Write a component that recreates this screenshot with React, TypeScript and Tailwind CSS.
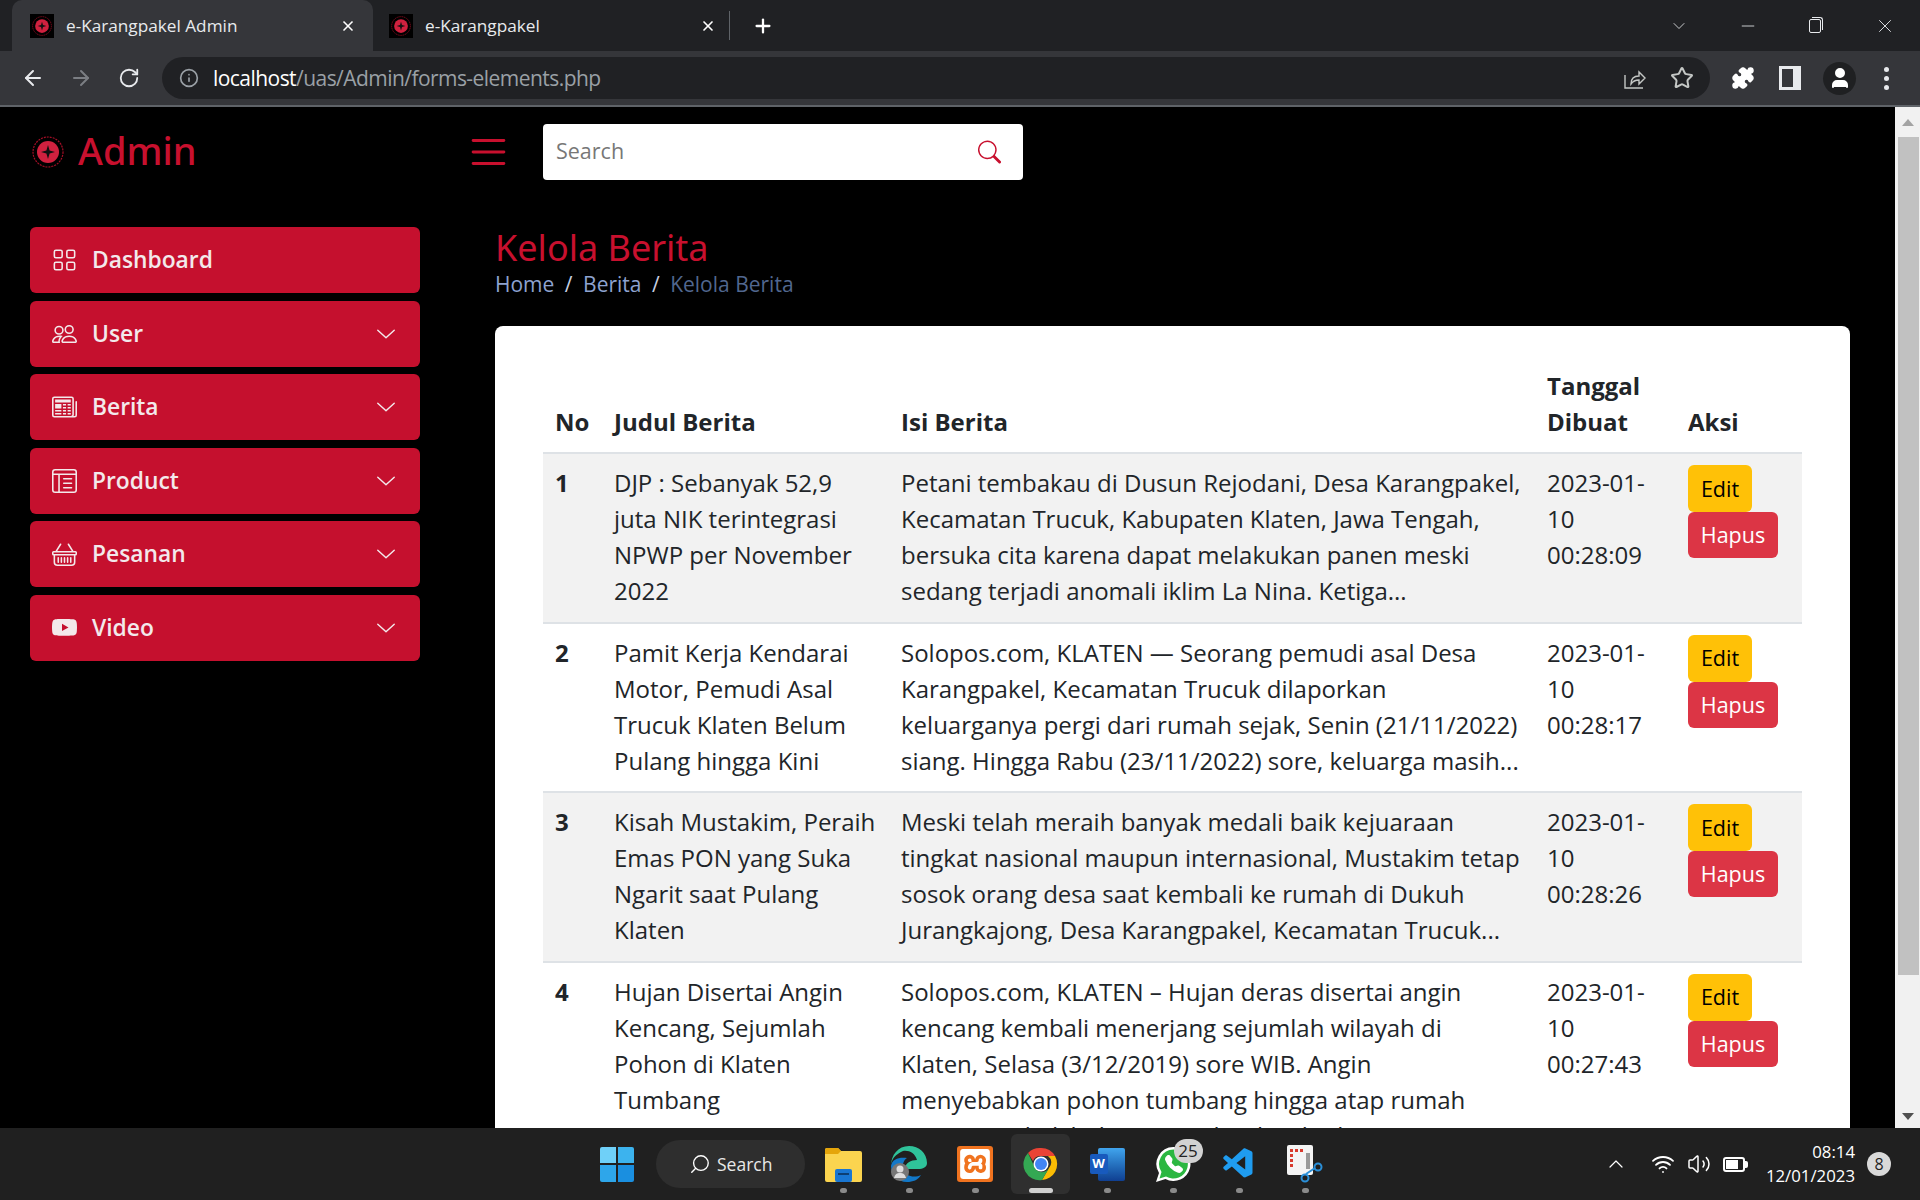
import { ReactNode } from "react";
import {
	BsBasket,
	BsChevronDown,
	BsGrid,
	BsLayoutTextWindowReverse,
	BsList,
	BsNewspaper,
	BsPeople,
	BsSearch,
	BsYoutube,
	BsTelephoneFill,
} from "react-icons/bs";
import { SiXampp } from "react-icons/si";
import { VscVscode } from "react-icons/vsc";
import {
	ArrowLeft,
	ArrowRight,
	RotateCw,
	Info,
	Star,
	Puzzle,
	User,
	X,
	Plus,
	ChevronDown,
	ChevronUp,
	Minus,
	Wifi,
	Volume2,
	Search,
} from "lucide-react";

type NewsRow = {
	no: number;
	title: string[];
	body: string[];
	time: string;
};

const rows: NewsRow[] = [
	{
		no: 1,
		title: ["DJP : Sebanyak 52,9", "juta NIK terintegrasi", "NPWP per November", "2022"],
		body: [
			"Petani tembakau di Dusun Rejodani, Desa Karangpakel,",
			"Kecamatan Trucuk, Kabupaten Klaten, Jawa Tengah,",
			"bersuka cita karena dapat melakukan panen meski",
			"sedang terjadi anomali iklim La Nina. Ketiga...",
		],
		time: "00:28:09",
	},
	{
		no: 2,
		title: ["Pamit Kerja Kendarai", "Motor, Pemudi Asal", "Trucuk Klaten Belum", "Pulang hingga Kini"],
		body: [
			"Solopos.com, KLATEN — Seorang pemudi asal Desa",
			"Karangpakel, Kecamatan Trucuk dilaporkan",
			"keluarganya pergi dari rumah sejak, Senin (21/11/2022)",
			"siang. Hingga Rabu (23/11/2022) sore, keluarga masih...",
		],
		time: "00:28:17",
	},
	{
		no: 3,
		title: ["Kisah Mustakim, Peraih", "Emas PON yang Suka", "Ngarit saat Pulang", "Klaten"],
		body: [
			"Meski telah meraih banyak medali baik kejuaraan",
			"tingkat nasional maupun internasional, Mustakim tetap",
			"sosok orang desa saat kembali ke rumah di Dukuh",
			"Jurangkajong, Desa Karangpakel, Kecamatan Trucuk...",
		],
		time: "00:28:26",
	},
	{
		no: 4,
		title: ["Hujan Disertai Angin", "Kencang, Sejumlah", "Pohon di Klaten", "Tumbang"],
		body: [
			"Solopos.com, KLATEN – Hujan deras disertai angin",
			"kencang kembali menerjang sejumlah wilayah di",
			"Klaten, Selasa (3/12/2019) sore WIB. Angin",
			"menyebabkan pohon tumbang hingga atap rumah",
			"warga rusak di beberapa titik wilayah Klaten...",
		],
		time: "00:27:43",
	},
];

const menu = [
	{ label: "Dashboard", icon: BsGrid, chevron: false },
	{ label: "User", icon: BsPeople, chevron: true },
	{ label: "Berita", icon: BsNewspaper, chevron: true },
	{ label: "Product", icon: BsLayoutTextWindowReverse, chevron: true },
	{ label: "Pesanan", icon: BsBasket, chevron: true },
	{ label: "Video", icon: BsYoutube, chevron: true },
];

function Favicon() {
	return (
		<div className="flex h-6 w-6 shrink-0 items-center justify-center bg-black">
			<LogoMark size={20} />
		</div>
	);
}

function LogoMark({ size }: { size: number }) {
	return (
		<svg width={size} height={size} viewBox="0 0 32 32">
			<circle cx="16" cy="16" r="15" fill="none" stroke="#a50e26" strokeWidth="1.2" strokeDasharray="2 1" />
			<circle cx="16" cy="16" r="11" fill="#d0213f" />
			<path d="M16 9 L17.6 14.4 L23 16 L17.6 17.6 L16 23 L14.4 17.6 L9 16 L14.4 14.4 Z" fill="#111" />
		</svg>
	);
}

function Tab({ title, active }: { title: string; active?: boolean }) {
	return (
		<div
			className={`flex h-[51px] items-center rounded-t-[10px] pl-[18px] pr-[17px] ${active ? "w-[361px] bg-[#35363a]" : "-ml-[2px] w-[362px]"}`}
		>
			<Favicon />
			<span className="ml-3 flex-1 text-[17.2px] text-[#e8eaed]">{title}</span>
			<X className="h-4 w-4 text-white" strokeWidth={2.5} />
		</div>
	);
}

function BrowserChrome() {
	return (
		<div className="shrink-0">
			<div className="flex h-[51px] items-center bg-[#202124] pl-3">
				<Tab title="e-Karangpakel Admin" active />
				<Tab title="e-Karangpakel" />
				<div className="-ml-[4px] h-[29px] w-px bg-[#5f6368]" />
				<Plus className="ml-[22px] h-[22px] w-[22px] text-white" strokeWidth={2.5} />
				<div className="ml-auto flex items-center text-[#e8eaed]">
					<ChevronDown className="h-[20px] w-[20px]" strokeWidth={1} />
					<Minus className="ml-[49px] h-[20px] w-[20px]" strokeWidth={1} />
					<div className="relative ml-[51px] h-[14px] w-[12px] rounded-[2px] border border-[#e8eaed] after:absolute after:-right-[3px] after:-top-[3px] after:h-[13px] after:w-[11px] after:rounded-tr-[3px] after:border-r after:border-t after:border-[#e8eaed]" />
					<X className="ml-[53px] mr-[24px] h-[22px] w-[22px]" strokeWidth={1} />
				</div>
			</div>
			<div className="flex h-[54px] items-center bg-[#35363a] pl-[21px] text-[#e8eaed]">
				<ArrowLeft className="h-6 w-6" strokeWidth={2} />
				<ArrowRight className="ml-6 h-6 w-6 text-[#7b7e83]" strokeWidth={2} />
				<RotateCw className="ml-[25px] h-[22px] w-[22px]" strokeWidth={2} />
				<div className="ml-[22px] flex h-[42px] w-[1548px] items-center rounded-full bg-[#202124] pl-[17px] pr-[16px]">
					<Info className="h-5 w-5 text-[#9aa0a6]" strokeWidth={2} />
					<span className="ml-[14px] mt-[1px] text-[21px] tracking-[-0.55px] text-white">
						localhost<span className="text-[#9aa0a6]">/uas/Admin/forms-elements.php</span>
					</span>
					<svg className="ml-auto h-6 w-6 text-[#c4c7c5]" viewBox="0 0 24 24" fill="none" stroke="currentColor" strokeWidth="1.4">
						<path d="M3 9v13h18M9 18c0-5 3-8 8-8V6l6 6-6 6v-4c-4 0-6 1-8 4z" />
					</svg>
					<Star className="ml-6 h-6 w-6 text-[#c4c7c5]" strokeWidth={2} />
				</div>
				<Puzzle className="ml-[21px] h-6 w-6 fill-white text-white" strokeWidth={1.5} />
				<div className="ml-6 h-[24px] w-[22px] border-[3px] border-r-[8px] border-[#e8eaed]" />
				<div className="ml-[22px] flex h-[33px] w-[33px] items-center justify-center rounded-full bg-[#1f2022]">
					<User className="h-6 w-6 fill-white text-white" />
				</div>
				<div className="ml-[28px] flex flex-col gap-[4px]">
					<div className="h-[5px] w-[5px] rounded-full bg-[#e8eaed]" />
					<div className="h-[5px] w-[5px] rounded-full bg-[#e8eaed]" />
					<div className="h-[5px] w-[5px] rounded-full bg-[#e8eaed]" />
				</div>
			</div>
			<div className="h-[2px] bg-[#5f6368]" />
		</div>
	);
}

function PageHeader() {
	return (
		<header className="flex h-[90px] items-center pl-[32px]">
			<div className="flex w-[432px] items-center">
				<LogoMark size={32} />
				<span className="-mt-[3px] ml-[14px] text-[38px] font-medium text-[#c8102e] [font-family:'Noto_Sans',sans-serif] [font-stretch:90%]">
					Admin
				</span>
			</div>
			<BsList className="h-[46px] w-[49px] text-[#c8102e]" preserveAspectRatio="none" />
			<div className="ml-[30px] flex h-[56px] w-[480px] items-center rounded-[4px] bg-white pl-[13px] pr-[22px]">
				<span className="-mt-[1px] flex-1 text-[21.5px] text-[#777]">Search</span>
				<BsSearch className="h-[24px] w-[23px] text-[#c8102e]" />
			</div>
		</header>
	);
}

function Sidebar() {
	return (
		<aside className="flex w-[465px] shrink-0 flex-col gap-[7.5px] pl-[30px] pr-[45px] pt-[30px]">
			{menu.map((item) => (
				<a key={item.label} className="flex h-[66px] items-center rounded-[6px] bg-[#c5102e] pl-[22px] pr-[23px] text-[#f3e9eb]">
					<item.icon className="h-[24px] w-[25px] shrink-0" preserveAspectRatio="none" />
					<span className="ml-[15px] flex-1 pt-[1px] text-[22.8px] font-semibold">{item.label}</span>
					{item.chevron && <BsChevronDown className="h-[20px] w-[22px]" preserveAspectRatio="none" />}
				</a>
			))}
		</aside>
	);
}

function Lines({ lines }: { lines: string[] }) {
	return (
		<>
			{lines.map((line) => (
				<div key={line} className="whitespace-nowrap">
					{line}
				</div>
			))}
		</>
	);
}

function NewsTable() {
	return (
		<table className="w-[1259px] table-fixed border-collapse text-[24px] leading-[36px] text-[#212529]">
			<colgroup>
				<col className="w-[58px]" />
				<col className="w-[287px]" />
				<col className="w-[646px]" />
				<col className="w-[141px]" />
				<col className="w-[127px]" />
			</colgroup>
			<thead>
				<tr className="border-b-2 border-[#dee2e6] text-left font-bold">
					<th className="px-[12px] pb-[12px] pt-[13px] align-bottom">No</th>
					<th className="px-[13px] pb-[12px] pt-[13px] align-bottom">Judul Berita</th>
					<th className="px-[13px] pb-[12px] pt-[13px] align-bottom">Isi Berita</th>
					<th className="px-[13px] pb-[12px] pt-[13px] align-bottom">
						Tanggal
						<br />
						Dibuat
					</th>
					<th className="px-[13px] pb-[12px] pt-[13px] align-bottom">Aksi</th>
				</tr>
			</thead>
			<tbody>
				{rows.map((row) => (
					<tr key={row.no} className={`border-b-2 border-[#dee2e6] align-top ${row.no % 2 === 1 ? "bg-[#f2f2f2]" : ""}`}>
						<td className="pb-[12.5px] pl-[12px] pr-[13px] pt-[11px] font-bold">{row.no}</td>
						<td className="px-[13px] pb-[12.5px] pt-[11px]">
							<Lines lines={row.title} />
						</td>
						<td className="px-[13px] pb-[12.5px] pt-[11px]">
							<Lines lines={row.body} />
						</td>
						<td className="px-[13px] pb-[12.5px] pt-[11px]">
							<Lines lines={["2023-01-", "10", row.time]} />
						</td>
						<td className="px-[13px] pb-[12.5px] pt-[11px]">
							<div className="flex flex-col items-start text-[21.5px]">
								<button className="h-[47px] w-[64px] rounded-[6px] bg-[#ffc107] text-black">Edit</button>
								<button className="h-[46px] w-[90px] rounded-[6px] bg-[#dc3545] text-white">Hapus</button>
							</div>
						</td>
					</tr>
				))}
			</tbody>
		</table>
	);
}

function Content() {
	return (
		<main className="min-w-0 flex-1 pl-[30px] pr-[45px] pt-[28px]">
			<h1 className="text-[36px] leading-[46px] text-[#c8102e] [font-family:'Noto_Sans',sans-serif]">Kelola Berita</h1>
			<nav className="-mt-[1px] flex gap-[10.5px] text-[21px] leading-[28px] text-[#8ea3d0]">
				<span>Home</span>
				<span className="text-[#c7cfe0]">/</span>
				<span>Berita</span>
				<span className="text-[#c7cfe0]">/</span>
				<span className="text-[#51678f]">Kelola Berita</span>
			</nav>
			<section className="mt-[28px] rounded-[8px] bg-white px-[48px] pb-[60px] pt-[29px]">
				<NewsTable />
			</section>
		</main>
	);
}

function Scrollbar() {
	return (
		<div className="flex w-[25px] shrink-0 flex-col items-center bg-[#f1f1f1]">
			<div className="mt-[12px] h-0 w-0 border-x-[6px] border-b-[7px] border-x-transparent border-b-[#a3a3a3]" />
			<div className="ml-[1px] mt-[11px] h-[838px] w-[21px] bg-[#c1c1c1]" />
			<div className="mb-[8px] mt-auto h-0 w-0 border-x-[6px] border-t-[7px] border-x-transparent border-t-[#505050]" />
		</div>
	);
}

function TaskSlot({ children, active }: { children: ReactNode; active?: boolean }) {
	return (
		<div className="relative flex h-[60px] w-[66px] items-center justify-center">
			{active && <div className="absolute inset-y-0 left-[3px] right-[4px] rounded-[6px] bg-[#2f2f2f]" />}
			<div className="relative flex items-center justify-center">{children}</div>
			<div className={`absolute bottom-[1px] h-[5px] rounded-full ${active ? "w-[24px] bg-[#d0d0d0]" : "w-[7px] bg-[#8a8a8a]"}`} />
		</div>
	);
}

function Taskbar() {
	return (
		<footer className="flex h-[72px] shrink-0 items-center bg-[#202020] pl-[600px] text-white">
			<div className="grid h-[35px] w-[34px] grid-cols-2 gap-[2px]">
				<div className="rounded-tl-[2px] bg-[#6fd0f8]" />
				<div className="rounded-tr-[2px] bg-[#3cb3ee]" />
				<div className="rounded-bl-[2px] bg-[#2ea6ea]" />
				<div className="rounded-br-[2px] bg-[#1a8fe0]" />
			</div>
			<div className="ml-[22px] flex h-[48px] w-[149px] items-center rounded-full bg-[#2e2e2e] pl-[33px]">
				<Search className="h-[24px] w-[22px] -scale-x-100" strokeWidth={1.5} />
				<span className="ml-[6px] text-[17.5px] text-[#e8e8e8]">Search</span>
			</div>
			<div className="ml-[5px] flex items-center">
				<TaskSlot>
					<svg width="37" height="35" viewBox="0 0 37 35">
						<path d="M0 3a2 2 0 0 1 2-2h11l3 3h19a2 2 0 0 1 2 2v27a2 2 0 0 1-2 2H2a2 2 0 0 1-2-2z" fill="#fbd44f" />
						<path d="M0 3a2 2 0 0 1 2-2h11l3 3-3 3H0z" fill="#e5a50a" />
						<rect x="10" y="22" width="17" height="13" rx="2" fill="#1976d2" />
						<rect x="13" y="26" width="11" height="2" fill="#0d3f73" />
					</svg>
				</TaskSlot>
				<TaskSlot>
					<svg width="36" height="36" viewBox="0 0 36 36">
						<path d="M18 0c10 0 18 7 18 17 0 4-4 6-9 6H14c0-6 6-9 12-9C24 7 18 4 12 5 5 8 0 13 0 20 0 9 7 0 18 0z" fill="#2fc39a" />
						<path d="M0 20c0 9 7 16 16 16 6 0 11-2 14-7-6 3-16 2-18-6-1-5 1-9 4-11C8 11 1 13 0 20z" fill="#1278c8" />
						<circle cx="9" cy="26" r="9" fill="#777" />
						<circle cx="9" cy="23" r="3.5" fill="#ddd" />
						<path d="M3 32c1-4 3-5 6-5s5 1 6 5z" fill="#ddd" />
					</svg>
				</TaskSlot>
				<TaskSlot>
					<div className="flex h-[36px] w-[36px] items-center justify-center rounded-[3px] bg-[#f0731f]">
						<SiXampp className="h-[30px] w-[30px] text-white" />
					</div>
				</TaskSlot>
				<TaskSlot active>
					<svg width="36" height="36" viewBox="0 0 36 36">
						<path d="M18 2a16 16 0 0 1 14 8H18a8 8 0 0 0-8 5L5 7a16 16 0 0 1 13-5z" fill="#ea4335" />
						<path d="M32 10a16 16 0 0 1-13 24l7-12a8 8 0 0 0-1-12z" fill="#fbbc04" />
						<path d="M5 7l7 15a8 8 0 0 0 14 0l-7 12A16 16 0 0 1 5 7z" fill="#34a853" />
						<circle cx="18" cy="18" r="7.5" fill="#fff" />
						<circle cx="18" cy="18" r="6" fill="#4285f4" />
					</svg>
				</TaskSlot>
				<TaskSlot>
					<div className="relative h-[33px] w-[35px]">
						<div className="absolute right-0 top-0 h-full w-[27px] rounded-[2px] bg-gradient-to-b from-[#41a5ee] to-[#103f91]" />
						<div className="absolute left-0 top-[6px] flex h-[20px] w-[18px] items-center justify-center rounded-[2px] bg-[#185abd] text-[13px] font-bold">W</div>
					</div>
				</TaskSlot>
				<TaskSlot>
					<div className="relative h-[37px] w-[37px]">
						<svg className="absolute inset-0" width="37" height="37" viewBox="0 0 37 37">
							<path d="M18.5 1a17 17 0 1 1-8 32L1 36l3-9A17 17 0 0 1 18.5 1z" fill="#fff" />
							<path d="M18.5 3.5a14.5 14.5 0 1 1-7.5 27L4.5 32.5l2-6.5A14.5 14.5 0 0 1 18.5 3.5z" fill="#2bb741" />
						</svg>
						<BsTelephoneFill className="absolute left-[10px] top-[9px] h-[18px] w-[18px] text-white" />
					</div>
					<div className="absolute -right-[11px] -top-[7px] flex h-[24px] w-[29px] items-center justify-center rounded-full bg-[#d2d2d2] text-[17px] text-[#222]">25</div>
				</TaskSlot>
				<TaskSlot>
					<VscVscode className="h-[36px] w-[36px] text-[#1f9cf0]" />
				</TaskSlot>
				<TaskSlot>
					<svg width="36" height="38" viewBox="0 0 36 38">
						<rect x="0" y="0" width="26" height="30" rx="2" fill="#f4f4f4" />
						<path d="M3 4h3v3H3zM8 4h3v3H8zM13 4h3v3h-3zM3 9h3v3H3zM3 14h3v3H3zM3 19h3v3H3z" fill="#d83b2e" />
						<path d="M19 8h4v16h-4z" fill="#9a9a9a" />
						<circle cx="31" cy="22" r="3.5" fill="none" stroke="#2a8fd8" strokeWidth="2" />
						<circle cx="18" cy="33" r="3.5" fill="none" stroke="#2a8fd8" strokeWidth="2" />
						<path d="M19 29l9-6" stroke="#2a8fd8" strokeWidth="2" />
					</svg>
				</TaskSlot>
			</div>
			<div className="ml-auto flex items-center pr-[29px]">
				<ChevronUp className="h-[24px] w-[24px]" strokeWidth={1.2} />
				<Wifi className="ml-[23px] h-[24px] w-[24px]" strokeWidth={1.8} />
				<Volume2 className="ml-[12px] h-[24px] w-[24px]" strokeWidth={1.5} />
				<div className="relative ml-[12px] h-[15px] w-[22px] rounded-[3px] border-2 border-white p-[1px] after:absolute after:-right-[5px] after:top-[2px] after:h-[7px] after:w-[3px] after:rounded-r-[2px] after:bg-white">
					<div className="h-full w-[12px] bg-white" />
				</div>
				<div className="ml-[21px] text-right text-[16.8px] leading-[24px]">
					<div>08:14</div>
					<div>12/01/2023</div>
				</div>
				<div className="ml-[12px] flex h-[24px] w-[24px] items-center justify-center rounded-full bg-[#d9d9d9] text-[16px] text-[#222]">8</div>
			</div>
		</footer>
	);
}

export default function App() {
	return (
		<div className="flex h-[1200px] w-[1920px] flex-col overflow-hidden bg-black [font-family:'Open_Sans',sans-serif] [font-stretch:90%]">
			<BrowserChrome />
			<div className="flex min-h-0 flex-1">
				<div className="min-w-0 flex-1 overflow-hidden">
					<PageHeader />
					<div className="flex">
						<Sidebar />
						<Content />
					</div>
				</div>
				<Scrollbar />
			</div>
			<Taskbar />
		</div>
	);
}
